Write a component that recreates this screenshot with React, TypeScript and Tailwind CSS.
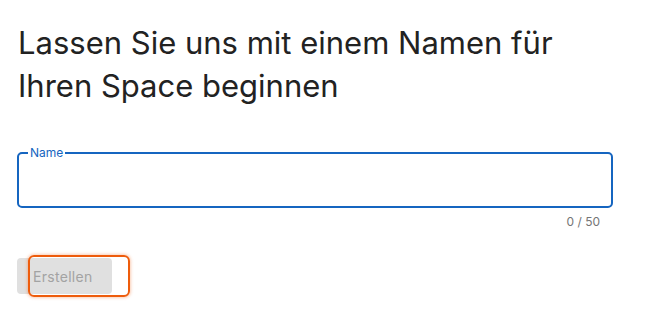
import React from "react";

export default function App() {
  return (
    <div className="min-h-screen bg-white px-[17px] pt-[21px]" style={{ fontFamily: "Inter, 'Noto Sans', sans-serif" }}>
      <div className="w-[596px]">
        <h1 className="text-[31px] leading-[43px] font-normal text-[#222222] pl-[1px]">
          Lassen Sie uns mit einem Namen für Ihren Space beginnen
        </h1>

        <div className="mt-[40px]">
          <fieldset className="relative h-[61px] rounded-[5px] border-2 border-[#1565c0] px-[9px]">
            <legend className="px-[2px] text-[12px] leading-[12px] text-[#1565c0]">Name</legend>
            <input className="w-full h-full outline-none bg-transparent text-[16px] text-[#222]" />
          </fieldset>
          <div className="flex justify-end pr-[13px] pt-[6px] text-[12px] leading-[16px] text-[#757575]">0 / 50</div>
        </div>

        <div className="relative mt-[28px] w-fit">
          <button className="h-[36px] w-[95px] rounded-[4px] bg-[#e0e0e0] pl-[16px] text-left text-[14px] text-[#a3a3a3] tracking-[0.3px]">
            Erstellen
          </button>
          <div className="absolute left-[11px] top-[-3px] h-[42px] w-[102px] rounded-[6px] border-2 border-[#ee5c0c] shadow-[0_0_3px_1px_rgba(238,92,12,0.3)]" />
        </div>
      </div>
    </div>
  );
}
